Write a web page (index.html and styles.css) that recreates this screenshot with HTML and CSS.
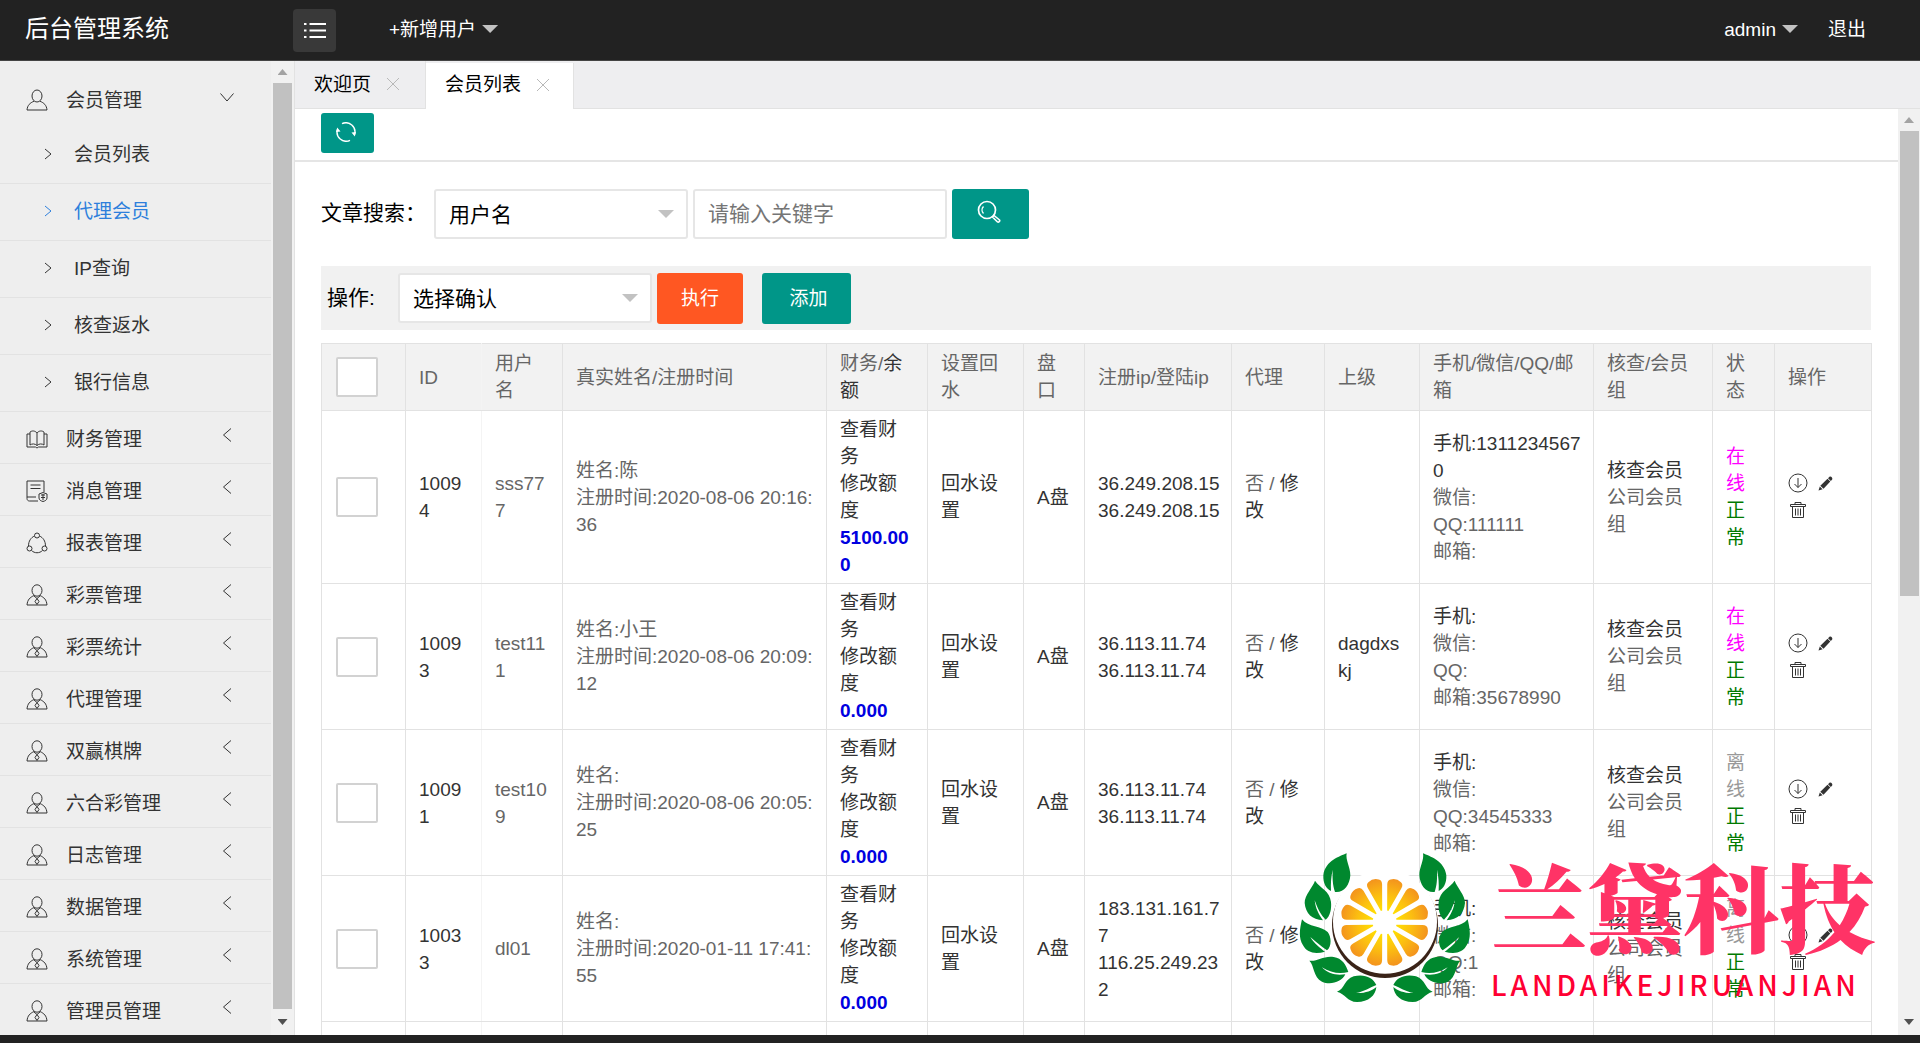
FILE: index.html
```html
<!DOCTYPE html>
<html lang="zh-CN">
<head>
<meta charset="utf-8">
<title>后台管理系统</title>
<link rel="stylesheet" href="styles.css">
</head>
<body>
<svg class="defs" aria-hidden="true">
  <symbol id="i-user" viewBox="0 0 22 22"><ellipse cx="11" cy="7" rx="5" ry="6"/><path d="M8 12.200C4 14 1.500 16 1 21h20c-.5-5-3-7-7-8.800"/></symbol>
  <symbol id="i-agent" viewBox="0 0 22 22"><ellipse cx="11" cy="6.500" rx="5" ry="5.700"/><path d="M8 11.500C4 13.500 1.500 15.500 1 21h20c-.5-5.500-3-7.500-7-9.500M8 12l3 2.500 3-2.500M11 14.500l-2 3 2 3 2-3z"/></symbol>
  <symbol id="i-book" viewBox="0 0 22 22"><path d="M11 5C9 2.500 6 2.500 4 4v13c2-1.500 5-1.500 7 .5 2-2 5-2 7-.5V4c-2-1.500-5-1.500-7 1zm0 0v12.500M4 6H1v13h8.500c.5 1 2.500 1 3 0H21V6h-3"/></symbol>
  <symbol id="i-doc" viewBox="0 0 22 22"><path d="M12 21H3.500C2 21 1 20 1 18.500V1h17v11M4.500 5h10M4.500 8.500h10M1 17h9"/><path d="M13 14l4-1.500 4 1.500v4c0 2-2 3-4 3.500-2-.5-4-1.500-4-3.500zM15 15h4M15 17.500h4M17 14v6"/></symbol>
  <symbol id="i-ring" viewBox="0 0 22 22"><circle cx="11" cy="3.500" r="2.500"/><circle cx="3.500" cy="16.500" r="2.500"/><circle cx="18.500" cy="16.500" r="2.500"/><path d="M8.500 4C5 5.500 2.500 9 2.500 14M13.500 4c3.500 1.500 6 5 6 10M5.500 18.500c3 3 8 3 11 0"/></symbol>
  <symbol id="i-left" viewBox="0 0 10 14"><path d="M9 0.500L1.500 7 9 13.500"/></symbol>
  <symbol id="i-right" viewBox="0 0 8 12"><path d="M1 1l6 5-6 5"/></symbol>
  <symbol id="i-down" viewBox="0 0 14 9"><path d="M.5.5L7 8 13.500.5"/></symbol>
  <symbol id="i-close" viewBox="0 0 14 14"><path d="M1 1l12 12M13 1L1 13"/></symbol>
  <symbol id="i-get" viewBox="0 0 20 20"><circle cx="10" cy="10" r="9"/><path d="M10 5v9.500M6.500 11l3.500 3.500 3.500-3.500"/></symbol>
  <symbol id="i-pen" viewBox="0 0 15 15"><path d="M11.500.8C13 0 15 2 14.200 3.500L12.800 5 10 2.200zM9.500 2.800L12.300 5.600 5.500 12.800 2.300 9.800zM1.800 10.500L4.600 13.200.5 14.500z" fill="currentColor" stroke="none"/></symbol>
  <symbol id="i-bin" viewBox="0 0 16 16"><path d="M.5 2.500h15v2H.5zM5 2.500V.5h6v2M2.500 4.500v11h11v-11M5.500 6.500v7M8 6.500v7M10.500 6.500v7"/></symbol>
</svg>

<header class="topbar">
  <a class="brand" href="#">后台管理系统</a>
  <button class="toggle" aria-label="菜单"><svg class="icon" width="22" height="17" viewBox="0 0 22 17"><path d="M5.500 2H22M5.500 8.500H22M5.500 15H22" stroke-width="1.800"/><path d="M0 2h2.500M0 8.500h2.500M0 15h2.500" stroke-width="2"/></svg></button>
  <a class="toplink" href="#">+新增用户<i class="caret"></i></a>
  <nav class="account"><a class="toplink" href="#">admin<i class="caret"></i></a><a class="toplink" href="#">退出</a></nav>
</header>

<div class="shell">
  <aside class="side">
    <nav class="menu">
      <a class="group first" href="#"><svg class="icon"><use href="#i-user"/></svg>会员管理<svg class="icon down"><use href="#i-down"/></svg></a>
      <a class="sub" href="#"><svg class="icon"><use href="#i-right"/></svg>会员列表</a>
      <a class="sub active" href="#"><svg class="icon"><use href="#i-right"/></svg>代理会员</a>
      <a class="sub" href="#"><svg class="icon"><use href="#i-right"/></svg>IP查询</a>
      <a class="sub" href="#"><svg class="icon"><use href="#i-right"/></svg>核查返水</a>
      <a class="sub" href="#"><svg class="icon"><use href="#i-right"/></svg>银行信息</a>
      <a class="group" href="#"><svg class="icon"><use href="#i-book"/></svg>财务管理<svg class="icon fold"><use href="#i-left"/></svg></a>
      <a class="group" href="#"><svg class="icon"><use href="#i-doc"/></svg>消息管理<svg class="icon fold"><use href="#i-left"/></svg></a>
      <a class="group" href="#"><svg class="icon"><use href="#i-ring"/></svg>报表管理<svg class="icon fold"><use href="#i-left"/></svg></a>
      <a class="group" href="#"><svg class="icon"><use href="#i-agent"/></svg>彩票管理<svg class="icon fold"><use href="#i-left"/></svg></a>
      <a class="group" href="#"><svg class="icon"><use href="#i-agent"/></svg>彩票统计<svg class="icon fold"><use href="#i-left"/></svg></a>
      <a class="group" href="#"><svg class="icon"><use href="#i-agent"/></svg>代理管理<svg class="icon fold"><use href="#i-left"/></svg></a>
      <a class="group" href="#"><svg class="icon"><use href="#i-agent"/></svg>双赢棋牌<svg class="icon fold"><use href="#i-left"/></svg></a>
      <a class="group" href="#"><svg class="icon"><use href="#i-agent"/></svg>六合彩管理<svg class="icon fold"><use href="#i-left"/></svg></a>
      <a class="group" href="#"><svg class="icon"><use href="#i-agent"/></svg>日志管理<svg class="icon fold"><use href="#i-left"/></svg></a>
      <a class="group" href="#"><svg class="icon"><use href="#i-agent"/></svg>数据管理<svg class="icon fold"><use href="#i-left"/></svg></a>
      <a class="group" href="#"><svg class="icon"><use href="#i-agent"/></svg>系统管理<svg class="icon fold"><use href="#i-left"/></svg></a>
      <a class="group" href="#"><svg class="icon"><use href="#i-agent"/></svg>管理员管理<svg class="icon fold"><use href="#i-left"/></svg></a>
    </nav>
    <div class="scrollbar"><i class="up"></i><span class="thumb full"></span><i class="dn"></i></div>
  </aside>

  <section class="work">
    <div class="tabs">
      <div class="tab">欢迎页<button aria-label="关闭欢迎页"><svg class="icon"><use href="#i-close"/></svg></button></div>
      <div class="tab on">会员列表<button aria-label="关闭会员列表"><svg class="icon"><use href="#i-close"/></svg></button></div>
    </div>
    <div class="frame">
      <main class="page">
        <div class="crumb"><button class="btn refresh" aria-label="刷新"><svg class="icon" width="20" height="20" viewBox="0 0 20 20"><path d="M6 1.700A9 9 0 0 1 18.500 12.500M14 18.300A9 9 0 0 1 1.500 7.500" stroke-width="1.400"/><path d="M0 10l1.200-4.500L4.500 9.500zM20 10l-1.200 4.500-3.300-4z" fill="currentColor" stroke="none"/></svg></button></div>
        <form class="search">
          <label for="field">文章搜索：</label>
          <span class="pick"><select id="field"><option>用户名</option></select><i class="caret"></i></span>
          <input class="text" type="text" placeholder="请输入关键字" aria-label="关键字">
          <button class="btn find" type="button" aria-label="搜索"><svg class="icon" width="24" height="24" viewBox="0 0 24 24"><circle cx="10" cy="10" r="8.500" stroke-width="1.700"/><path d="M6.500 13.500a5 5 0 0 1 0-7" stroke-width="1.400"/><path d="M15.500 17l1.500-1.500 5.500 4.500c.8 1-1 2.800-2 2z" stroke-width="1.600"/></svg></button>
        </form>
        <div class="ops">
          <label for="action">操作:</label>
          <span class="pick"><select id="action"><option>选择确认</option></select><i class="caret"></i></span>
          <button class="btn run">执行</button>
          <button class="btn add">添加</button>
        </div>
        <table class="grid">
          <colgroup><col class="c84"><col class="c76"><col class="c81"><col class="c264"><col class="c101"><col class="c96"><col class="c61"><col class="c147"><col class="c93"><col class="c95"><col class="c174"><col class="c119"><col class="c62"><col class="c97"></colgroup>
          <thead><tr><th><input type="checkbox" aria-label="全选"></th><th>ID</th><th>用户名</th><th>真实姓名/注册时间</th><th>财务/<a href="#">余额</a></th><th>设置回水</th><th>盘口</th><th>注册ip/登陆ip</th><th>代理</th><th>上级</th><th>手机/微信/QQ/邮箱</th><th>核查/会员组</th><th>状态</th><th>操作</th></tr></thead>
          <tbody>
            <tr><td><input type="checkbox" aria-label="10094"></td><td><a href="#">10094</a></td><td>sss777</td><td>姓名:陈<br>注册时间:2020-08-06 20:16:36</td><td class="money"><a href="#">查看财务</a><br><a href="#">修改额度</a><br><b>5100.000</b></td><td><a href="#">回水设置</a></td><td><a href="#">A盘</a></td><td><a href="#">36.249.208.15<br>36.249.208.15</a></td><td>否 / <a href="#">修改</a></td><td></td><td><a href="#">手机:13112345670</a><br>微信:<br>QQ:111111<br>邮箱:</td><td><a href="#">核查会员</a><br>公司会员组</td><td><span class="online">在线</span><br><span class="ok">正常</span></td><td class="acts"><a href="#" aria-label="下载"><svg class="icon get"><use href="#i-get"/></svg></a><a href="#" aria-label="编辑"><svg class="icon pen"><use href="#i-pen"/></svg></a><br><a href="#" aria-label="删除"><svg class="icon bin"><use href="#i-bin"/></svg></a></td></tr>
            <tr><td><input type="checkbox" aria-label="10093"></td><td><a href="#">10093</a></td><td>test111</td><td>姓名:小王<br>注册时间:2020-08-06 20:09:12</td><td class="money"><a href="#">查看财务</a><br><a href="#">修改额度</a><br><b>0.000</b></td><td><a href="#">回水设置</a></td><td><a href="#">A盘</a></td><td><a href="#">36.113.11.74<br>36.113.11.74</a></td><td>否 / <a href="#">修改</a></td><td><a href="#">dagdxskj</a></td><td><a href="#">手机:</a><br>微信:<br>QQ:<br>邮箱:35678990</td><td><a href="#">核查会员</a><br>公司会员组</td><td><span class="online">在线</span><br><span class="ok">正常</span></td><td class="acts"><a href="#" aria-label="下载"><svg class="icon get"><use href="#i-get"/></svg></a><a href="#" aria-label="编辑"><svg class="icon pen"><use href="#i-pen"/></svg></a><br><a href="#" aria-label="删除"><svg class="icon bin"><use href="#i-bin"/></svg></a></td></tr>
            <tr><td><input type="checkbox" aria-label="10091"></td><td><a href="#">10091</a></td><td>test109</td><td>姓名:<br>注册时间:2020-08-06 20:05:25</td><td class="money"><a href="#">查看财务</a><br><a href="#">修改额度</a><br><b>0.000</b></td><td><a href="#">回水设置</a></td><td><a href="#">A盘</a></td><td><a href="#">36.113.11.74<br>36.113.11.74</a></td><td>否 / <a href="#">修改</a></td><td></td><td><a href="#">手机:</a><br>微信:<br>QQ:34545333<br>邮箱:</td><td><a href="#">核查会员</a><br>公司会员组</td><td><span class="offline">离线</span><br><span class="ok">正常</span></td><td class="acts"><a href="#" aria-label="下载"><svg class="icon get"><use href="#i-get"/></svg></a><a href="#" aria-label="编辑"><svg class="icon pen"><use href="#i-pen"/></svg></a><br><a href="#" aria-label="删除"><svg class="icon bin"><use href="#i-bin"/></svg></a></td></tr>
            <tr><td><input type="checkbox" aria-label="10033"></td><td><a href="#">10033</a></td><td>dl01</td><td>姓名:<br>注册时间:2020-01-11 17:41:55</td><td class="money"><a href="#">查看财务</a><br><a href="#">修改额度</a><br><b>0.000</b></td><td><a href="#">回水设置</a></td><td><a href="#">A盘</a></td><td><a href="#">183.131.161.77<br>116.25.249.232</a></td><td>否 / <a href="#">修改</a></td><td></td><td><a href="#">手机:</a><br>微信:<br>QQ:1<br>邮箱:</td><td><a href="#">核查会员</a><br>公司会员组</td><td><span class="offline">离线</span><br><span class="ok">正常</span></td><td class="acts"><a href="#" aria-label="下载"><svg class="icon get"><use href="#i-get"/></svg></a><a href="#" aria-label="编辑"><svg class="icon pen"><use href="#i-pen"/></svg></a><br><a href="#" aria-label="删除"><svg class="icon bin"><use href="#i-bin"/></svg></a></td></tr>
            <tr class="next"><td></td><td></td><td></td><td></td><td></td><td></td><td></td><td></td><td></td><td></td><td></td><td></td><td></td><td></td></tr>
          </tbody>
        </table>
      </main>
      <div class="scrollbar"><i class="up"></i><span class="thumb"></span><i class="dn"></i></div>
    </div>
  </section>
</div>
<footer class="foot"></footer>

<div class="mark">
  <svg width="172" height="150" viewBox="26 38 516 450" aria-hidden="true">
    <defs>
      <radialGradient id="juice" gradientUnits="userSpaceOnUse" cx="0" cy="0" r="134"><stop offset=".25" stop-color="#ffe100"/><stop offset=".6" stop-color="#fcc010"/><stop offset="1" stop-color="#f3921e"/></radialGradient>
      <path id="seg" d="M-2-36L-22-112Q-25-125-16-129Q0-138 16-129Q25-125 22-112L2-36Z" fill="url(#juice)"/>
      <g id="leaves" fill="#00882e">
        <path d="M169 39C150 48 105 60 99 105C98 130 108 146 122 152C121 130 122 110 127 88C126 115 127 135 134 155C160 158 178 135 180 105C180 80 165 60 169 39Z"/>
        <path d="M74 121C68 140 42 165 43 188C46 220 65 238 98 240C85 222 76 205 73 180C82 205 92 225 106 238C120 228 124 205 122 185C118 150 90 145 74 121Z"/>
        <path d="M35 237C30 260 22 290 38 315C50 338 75 342 104 334C88 322 72 310 60 290C78 305 92 318 110 330C124 318 124 290 112 275C92 256 55 262 35 237Z"/>
        <path d="M57 361C80 365 100 345 130 350C155 353 168 375 174 395C150 402 120 398 95 381C115 403 140 405 165 402C155 425 120 435 95 424C68 410 72 375 57 361Z"/>
        <path d="M140 454C165 445 160 418 190 408C220 400 248 410 258 434C240 440 220 455 197 458C220 460 245 452 258 440C256 465 235 485 200 485C170 484 165 460 140 454Z"/>
      </g>
    </defs>
    <circle cx="284" cy="254" r="159" fill="#3a2318"/>
    <circle cx="284" cy="244" r="156" fill="#fff"/>
    <g transform="translate(283 246)">
      <use href="#seg" transform="rotate(15)"/><use href="#seg" transform="rotate(45)"/><use href="#seg" transform="rotate(75)"/><use href="#seg" transform="rotate(105)"/><use href="#seg" transform="rotate(135)"/><use href="#seg" transform="rotate(165)"/><use href="#seg" transform="rotate(195)"/><use href="#seg" transform="rotate(225)"/><use href="#seg" transform="rotate(255)"/><use href="#seg" transform="rotate(285)"/><use href="#seg" transform="rotate(315)"/><use href="#seg" transform="rotate(345)"/>
    </g>
    <use href="#leaves"/><use href="#leaves" transform="translate(567 0) scale(-1 1)"/>
  </svg>
  <div class="words"><strong>兰黛科技</strong><span>LANDAIKEJIRUANJIAN</span></div>
</div>
</body>
</html>
```
FILE: styles.css
```css
* { box-sizing: border-box; }
body {
  margin: 0;
  height: 100vh;
  display: flex;
  flex-direction: column;
  overflow: hidden;
  position: relative;
  background: #fff;
  color: #000;
  font: 19px/27px "Liberation Sans", "Noto Sans CJK SC", sans-serif;
}
a { color: inherit; text-decoration: none; }
button, input, select { font: inherit; margin: 0; }
button { border: 0; padding: 0; background: none; color: inherit; cursor: pointer; }
.defs { display: none; }
.icon { fill: none; stroke: currentColor; flex: none; }
.caret {
  width: 16px; height: 8px;
  background: #c2c2c2;
  clip-path: polygon(0 0, 100% 0, 50% 100%);
}

/* top bar */
.topbar {
  flex: none;
  height: 61px;
  display: flex;
  align-items: center;
  padding: 0 54px 2px 25px;
  background: #222;
  border-bottom: 1px solid #444;
  color: #fff;
}
.brand { width: 268px; font-size: 24px; line-height: 36px; }
.toggle {
  width: 43px; height: 43px;
  margin: 2px 53px 0 0;
  display: grid;
  place-items: center;
  background: #393939;
  border-radius: 4px;
}
.toplink { display: flex; align-items: center; gap: 6px; }
.account { margin-left: auto; display: flex; gap: 30px; }

.shell { flex: 1; min-height: 0; display: flex; }
.foot { flex: none; height: 8px; background: #222; }

/* left menu */
.side { flex: none; width: 295px; display: flex; background: #eee; border-right: 1px solid #e2e2e2; }
.menu { flex: 1; overflow: hidden; color: #333; }
.group, .sub { display: flex; align-items: center; border-bottom: 1px solid #e2e2e2; }
.group { height: 52px; padding: 3px 37px 0 26px; gap: 18px; }
.group > .icon:first-child { width: 22px; height: 22px; }
.group.first { margin-top: 14px; border: 0; padding: 0 37px 2px 26px; }
.group .icon.fold { width: 10px; height: 14px; margin: 0 2px 8px auto; }
.group .icon.down { width: 14px; height: 9px; margin: 0 0 6px auto; }
.sub { height: 57px; padding: 0 0 2px 44px; gap: 22px; }
.sub .icon { width: 8px; height: 12px; }
.active { color: #2d7fdc; }

.scrollbar {
  flex: none;
  width: 22px;
  padding: 0 1px;
  display: flex;
  flex-direction: column;
  align-items: center;
  background: #f1f1f1;
}
.side .scrollbar { width: 23px; padding: 0 2px; }
.scrollbar i { flex: none; width: 10px; height: 6px; background: #505050; }
.scrollbar .up { margin: 8px 0; background: #a3a3a3; clip-path: polygon(50% 0, 100% 100%, 0 100%); }
.scrollbar .dn { margin: auto 0 10px; clip-path: polygon(0 0, 100% 0, 50% 100%); }
.thumb { width: 19px; height: 465px; background: #c1c1c1; }
.thumb.full { height: auto; flex: 1; margin-bottom: 10px; }

/* tabs */
.work { flex: 1; min-width: 0; display: flex; flex-direction: column; }
.tabs { flex: none; height: 48px; display: flex; background: #eeeef0; border-bottom: 1px solid #e2e2e2; }
.tab { display: flex; align-items: center; gap: 15px; padding: 0 25px 1px 19px; border-right: 1px solid #e2e2e2; }
.tab.on { margin: 2px 0 -1px; padding: 0 23px 3px 19px; background: #fff; }
.tab button { display: grid; place-items: center; }
.tab .icon { width: 14px; height: 14px; color: #b8b8b8; }

.frame { flex: 1; min-height: 0; display: flex; }
.page { flex: 1; min-width: 0; overflow: hidden; }
.btn { display: grid; place-items: center; border-radius: 3px; background: #009688; color: #fff; }
.crumb { height: 53px; padding: 4px 26px; border-bottom: 2px solid #e5e5e5; }
.refresh { width: 53px; height: 40px; padding: 0 4px 2px 0; }

/* search and batch bars */
.search, .ops { display: flex; align-items: center; font-size: 21px; margin: 0 27px 0 26px; }
.search { height: 50px; margin-top: 27px; gap: 5px; }
.search label { width: 108px; padding-bottom: 4px; white-space: nowrap; }
.pick { position: relative; width: 254px; height: 50px; }
.pick select {
  width: 100%; height: 100%;
  appearance: none;
  padding: 0 13px;
  border: 2px solid #e6e6e6;
  border-radius: 3px;
  background: #fff;
  color: #000;
}
.pick .caret { position: absolute; right: 14px; top: 21px; pointer-events: none; }
.text { width: 254px; height: 50px; padding: 0 13px; border: 2px solid #e6e6e6; border-radius: 3px; background: #fff; }
.text::placeholder { color: #757575; }
.find { width: 77px; height: 50px; padding: 0 4px 4px 0; }
.ops { height: 64px; margin-top: 27px; padding-left: 6px; background: #f1f1f1; }
.ops label { width: 71px; padding-bottom: 2px; }
.ops .btn { height: 51px; font-size: 19px; }
.ops .run { width: 86px; margin: 0 19px 0 5px; background: #ff5722; }
.ops .add { width: 89px; padding-left: 4px; }

/* member table */
.grid {
  width: calc(100% - 53px);
  margin: 13px 27px 0 26px;
  border-collapse: collapse;
  table-layout: fixed;
  color: #666;
}
.grid th, .grid td {
  padding: 5px 11px 5px 13px;
  border: 1px solid #e2e2e2;
  text-align: left;
  font-weight: 400;
  word-break: break-all;
}
.grid th { padding-top: 6px; padding-bottom: 6px; background: #f2f2f2; }
.grid th:nth-child(2), .grid td:nth-child(2) { border-right-color: #f4f4f4; }
.grid .money { padding-right: 14px; }
.grid a { color: #333; }
.grid b { color: #0000e0; }
.grid input {
  display: block;
  appearance: none;
  width: 42px; height: 40px;
  margin-left: 1px;
  border: 2px solid #d2d2d2;
  border-radius: 2px;
  background: #fff;
}
.online { color: #f0f; }
.offline { color: #999; }
.ok { color: #007a00; }
.acts .get { width: 20px; height: 20px; margin-right: 10px; vertical-align: -3px; }
.acts .pen { width: 15px; height: 15px; vertical-align: -1px; }
.acts .bin { width: 16px; height: 16px; margin: 0 2px; vertical-align: -1px; }
.next td { height: 147px; }
.c84 { width: 84px; } .c76 { width: 76px; } .c81 { width: 81px; } .c264 { width: 264px; }
.c101 { width: 101px; } .c96 { width: 96px; } .c61 { width: 61px; } .c147 { width: 147px; }
.c93 { width: 93px; } .c95 { width: 95px; } .c174 { width: 174px; } .c119 { width: 119px; }
.c62 { width: 62px; } .c97 { width: 97px; }

/* company mark floating over the page */
.mark {
  position: absolute;
  right: 45px;
  bottom: 40px;
  display: flex;
  gap: 20px;
  pointer-events: none;
}
.words { display: flex; flex-direction: column; font-family: "Noto Serif CJK SC", "Noto Sans CJK SC", serif; }
.words strong { padding-bottom: 10px; font-size: 96px; line-height: 102px; font-weight: 900; color: #ff3366; white-space: nowrap; }
.words span { font-family: "Noto Sans CJK SC", sans-serif; font-size: 28px; line-height: 38px; font-weight: 500; letter-spacing: 4px; color: #ff0033; }
```
